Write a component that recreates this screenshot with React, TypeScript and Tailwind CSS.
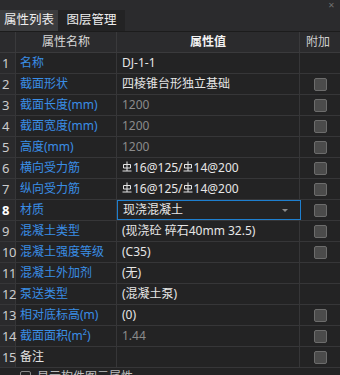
type Row = {
    no: number;
    name: string;
    value: string;
    muted?: boolean;
    plainName?: boolean;
    check: boolean;
    select?: boolean;
};

const rows: Row[] = [
    { no: 1, name: "名称", value: "DJ-1-1", check: false },
    { no: 2, name: "截面形状", value: "四棱锥台形独立基础", check: true },
    { no: 3, name: "截面长度(mm)", value: "1200", muted: true, check: true },
    { no: 4, name: "截面宽度(mm)", value: "1200", muted: true, check: true },
    { no: 5, name: "高度(mm)", value: "1200", muted: true, check: true },
    { no: 6, name: "横向受力筋", value: "$16@125/$14@200", check: true },
    { no: 7, name: "纵向受力筋", value: "$16@125/$14@200", check: true },
    { no: 8, name: "材质", value: "现浇混凝土", check: true, select: true },
    { no: 9, name: "混凝土类型", value: "(现浇砼 碎石40mm 32.5)", check: true },
    { no: 10, name: "混凝土强度等级", value: "(C35)", check: true },
    { no: 11, name: "混凝土外加剂", value: "(无)", check: false },
    { no: 12, name: "泵送类型", value: "(混凝土泵)", check: false },
    { no: 13, name: "相对底标高(m)", value: "(0)", check: true },
    { no: 14, name: "截面面积(m²)", value: "1.44", muted: true, check: true },
    { no: 15, name: "备注", value: "", plainName: true, check: true },
];

// steel grade mark (HRB400)
function Rebar() {
    return (
        <svg width="10" height="11" viewBox="0 0 10 11" className="inline-block mr-[1px] -mt-[4px]">
            <path
                d="M5 0.5V10M1.5 3.5H8.5V7H1.5ZM0.5 10H9.5"
                stroke="currentColor"
                strokeWidth="1"
                fill="none"
            />
        </svg>
    );
}

function Value({ text }: { text: string }) {
    const parts = text.split("$");
    return (
        <>
            {parts.map((p, i) => (
                <span key={i}>
                    {i > 0 && <Rebar />}
                    {p}
                </span>
            ))}
        </>
    );
}

function Box() {
    return <div className="w-[13px] h-[13px] rounded-[2px] bg-[#4b4b4b] border border-[#6c6c6c]" />;
}

export default function App() {
    return (
        <div
            className="w-[340px] h-[375px] overflow-hidden bg-[#232324] text-[12px] leading-none text-[#dcdcdc]"
            style={{ fontFamily: '"Noto Sans", "Noto Sans CJK SC", sans-serif' }}
        >
            <div className="h-[10px] bg-[#2b2b2d] flex justify-end items-center pr-[5px]">
                <span className="text-[8px] text-[#6f6f6f] leading-[8px]">✕</span>
            </div>
            <div className="h-[22px] bg-[#2b2b2d] flex border-b border-[#1c1c1c]">
                <div className="w-[58px] bg-[#3b3c3e] flex items-center justify-center text-[12.5px] text-[#eeeeee]">属性列表</div>
                <div className="w-[67px] bg-[#232324] flex items-center justify-center text-[12.5px] text-[#eeeeee]">图层管理</div>
            </div>
            <div className="grid grid-cols-[16px_101px_183px_40px] h-[21px] bg-[#2b2b2d] border-b border-[#3a3a3c]">
                <div className="border-r border-[#3a3a3c]" />
                <div className="border-r border-[#3a3a3c] flex items-center justify-center text-[#d8d8d8]">属性名称</div>
                <div className="border-r border-[#3a3a3c] flex items-center justify-center font-bold text-[#f2f2f2]">属性值</div>
                <div className="flex items-center pl-[6px] text-[#cfcfcf]">附加</div>
            </div>
            {rows.map((r) => (
                <div key={r.no} className="grid grid-cols-[16px_101px_183px_40px] h-[21px] border-b border-[#363638]">
                    <div
                        className={
                            "bg-[#2a2a2c] border-r border-[#363638] flex items-center pl-[2px] text-[13px] tracking-[-0.5px] " +
                            (r.no === 8 ? "font-bold text-white" : "text-[#cccccc]")
                        }
                    >
                        {r.no}
                    </div>
                    <div
                        className={
                            "border-r border-[#363638] flex items-center pl-[4px] whitespace-nowrap " +
                            (r.plainName ? "text-[#e2e2e2]" : "text-[#3a8ee6]")
                        }
                    >
                        {r.name}
                    </div>
                    {r.select ? (
                        <div className="border border-[#1e7fcf] -mr-[1px] flex items-center justify-between pl-[5px] pr-[12px] text-[#e8e8e8]">
                            <span>{r.value}</span>
                            <span className="w-0 h-0 border-l-[3px] border-r-[3px] border-t-[3px] border-l-transparent border-r-transparent border-t-[#8a8a8a]" />
                        </div>
                    ) : (
                        <div
                            className={
                                "border-r border-[#363638] flex items-center pl-[5px] whitespace-nowrap " +
                                (r.muted ? "text-[#8b8b8b]" : "text-[#e6e6e6]")
                            }
                        >
                            <Value text={r.value} />
                        </div>
                    )}
                    <div className="flex items-center justify-center pl-[1px]">{r.check && <Box />}</div>
                </div>
            ))}
            <div className="flex items-start gap-[6px] pl-[20px] pt-[3px] h-[8px] text-[#bdbdbd]">
                <div className="w-[11px] h-[11px] border border-[#8a8a8a] rounded-[2px]" />
                <span>显示构件图元属性</span>
            </div>
        </div>
    );
}
